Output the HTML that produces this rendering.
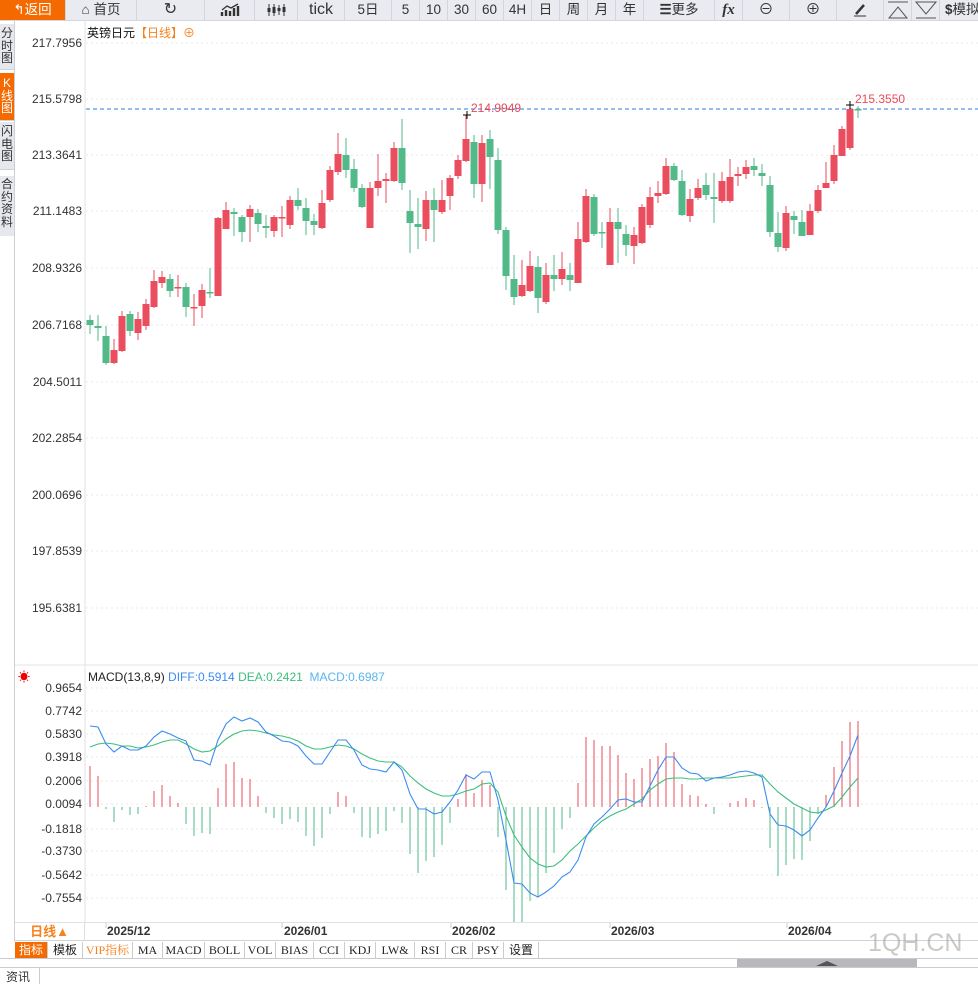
<!DOCTYPE html>
<html><head><meta charset="utf-8">
<style>
*{margin:0;padding:0;box-sizing:border-box}
body{width:978px;height:984px;overflow:hidden;background:#fff;font-family:"Liberation Sans","Noto Sans CJK SC",sans-serif;position:relative}
.tb{position:absolute;left:0;top:0;width:978px;height:21px;background:#e9ebf0;border-bottom:1px solid #d5d8de;overflow:hidden}
.b{position:absolute;top:0;height:21px;border-right:1px solid #d2d5db;font-size:13.5px;color:#333;text-align:center;line-height:20px;white-space:nowrap;overflow:hidden}
.lt{position:absolute;left:0;width:14px;background:#e6e8ee;color:#333;font-size:12px;line-height:12.5px;text-align:center;border-bottom:1px solid #cfd2d8}
.ax{position:absolute;font-size:12px;color:#333;text-align:right;width:80px;left:2px}
.tab{position:absolute;top:942px;height:17px;border-right:1px solid #ccc;font-size:12px;line-height:17px;text-align:center;color:#222;font-family:"Liberation Serif","Noto Serif CJK SC",serif}
</style></head><body>
<div class="tb">
<div class="b" style="left:0;width:66px;background:#f56a00;color:#fff;">↰返回</div>
<div class="b" style="left:66px;width:71px">⌂ 首页</div>
<div class="b" style="left:137px;width:68px;font-size:16px">↻</div>
<div class="b" style="left:205px;width:50px"><svg width="20" height="14" viewBox="0 0 20 14" style="margin-top:3px"><path d="M2 13V9M6 13V7M10 13V8M14 13V5M18 13V3" stroke="#333" stroke-width="2.4"/><path d="M2 7L7 3L11 5L18 1" stroke="#333" fill="none" stroke-width="1.3"/></svg></div>
<div class="b" style="left:255px;width:43px"><svg width="20" height="14" viewBox="0 0 20 14" style="margin-top:3px"><path d="M3 1v12M8 1v12M13 2v10M18 1v12" stroke="#333"/><path d="M3 5v4M8 4v6M13 5v3M18 4v5" stroke="#333" stroke-width="3"/></svg></div>
<div class="b" style="left:298px;width:47px;font-size:16px">tick</div>
<div class="b" style="left:345px;width:47px">5日</div>
<div class="b" style="left:392px;width:28px">5</div>
<div class="b" style="left:420px;width:28px">10</div>
<div class="b" style="left:448px;width:28px">30</div>
<div class="b" style="left:476px;width:28px">60</div>
<div class="b" style="left:504px;width:28px">4H</div>
<div class="b" style="left:532px;width:28px">日</div>
<div class="b" style="left:560px;width:28px">周</div>
<div class="b" style="left:588px;width:28px">月</div>
<div class="b" style="left:616px;width:28px">年</div>
<div class="b" style="left:644px;width:71px"><b>☰</b>更多</div>
<div class="b" style="left:715px;width:28px;font-style:italic;font-weight:bold;font-family:'Liberation Serif',serif;font-size:15px">fx</div>
<div class="b" style="left:743px;width:47px;font-size:15px">⊖</div>
<div class="b" style="left:790px;width:47px;font-size:15px">⊕</div>
<div class="b" style="left:837px;width:47px"><svg width="16" height="14" viewBox="0 0 16 14" style="margin-top:3px"><path d="M4 11L12 2" stroke="#333" stroke-width="2.5"/><path d="M2 13H14" stroke="#333"/></svg></div>
<div class="b" style="left:884px;width:28px"><svg width="22" height="18" viewBox="0 0 22 18" style="margin-top:1px"><path d="M1 1H21M2 17H20L11 6Z" stroke="#555" fill="none"/></svg></div>
<div class="b" style="left:912px;width:28px"><svg width="22" height="18" viewBox="0 0 22 18" style="margin-top:1px"><path d="M1 1H21L11 13ZM1 17H21" stroke="#555" fill="none"/></svg></div>
<div class="b" style="left:940px;width:60px;text-align:left;padding-left:5px"><b>$</b>模拟</div>
</div>
<div class="lt" style="top:24px;height:46px;padding-top:3px">分<br>时<br>图</div>
<div class="lt" style="top:73px;height:48px;padding-top:4px;background:#f56a00;color:#fff">K<br>线<br>图</div>
<div class="lt" style="top:122px;height:48px;padding-top:3px">闪<br>电<br>图</div>
<div class="lt" style="top:176px;height:60px;padding-top:2px;border-bottom:none">合<br>约<br>资<br>料</div>
<div style="position:absolute;left:14px;top:21px;width:1px;height:921px;background:#ccd0d6"></div>

<div class="ax" style="top:36px">217.7956</div>
<div class="ax" style="top:92px">215.5798</div>
<div class="ax" style="top:148px">213.3641</div>
<div class="ax" style="top:204px">211.1483</div>
<div class="ax" style="top:261px">208.9326</div>
<div class="ax" style="top:318px">206.7168</div>
<div class="ax" style="top:375px">204.5011</div>
<div class="ax" style="top:431px">202.2854</div>
<div class="ax" style="top:488px">200.0696</div>
<div class="ax" style="top:544px">197.8539</div>
<div class="ax" style="top:601px">195.6381</div>
<div class="ax" style="top:681px">0.9654</div>
<div class="ax" style="top:704px">0.7742</div>
<div class="ax" style="top:727px">0.5830</div>
<div class="ax" style="top:750px">0.3918</div>
<div class="ax" style="top:774px">0.2006</div>
<div class="ax" style="top:797px">0.0094</div>
<div class="ax" style="top:822px">-0.1818</div>
<div class="ax" style="top:844px">-0.3730</div>
<div class="ax" style="top:868px">-0.5642</div>
<div class="ax" style="top:891px">-0.7554</div>

<div style="position:absolute;left:87px;top:24px;font-size:12px;color:#111">英镑日元<span style="color:#f58220">【日线】⊕</span></div>
<div style="position:absolute;left:18px;top:668px;font-size:12px;color:#e00">☀</div>
<div style="position:absolute;left:88px;top:670px;font-size:12px;color:#222">MACD(13,8,9) <span style="color:#3b8cf0">DIFF:0.5914</span> <span style="color:#3cbf7a">DEA:0.2421</span> &nbsp;<span style="color:#5ab4f0">MACD:0.6987</span></div>

<svg id="ch" width="978" height="984" style="position:absolute;left:0;top:0;pointer-events:none"></svg>

<div style="position:absolute;left:15px;top:922px;width:963px;height:1px;background:#dfe3e8"></div>
<div style="position:absolute;left:15px;top:940px;width:963px;height:1px;background:#cfd3d8"></div>
<div style="position:absolute;left:15px;top:922px;width:70px;height:19px;border-right:1px solid #ddd;font-size:13px;font-weight:bold;color:#f58220;text-align:center;line-height:19px">日线▲</div>
<div style="position:absolute;top:924px;left:107px;font-size:12px;font-weight:bold;color:#333">2025/12</div>
<div style="position:absolute;top:924px;left:284px;font-size:12px;font-weight:bold;color:#333">2026/01</div>
<div style="position:absolute;top:924px;left:452px;font-size:12px;font-weight:bold;color:#333">2026/02</div>
<div style="position:absolute;top:924px;left:611px;font-size:12px;font-weight:bold;color:#333">2026/03</div>
<div style="position:absolute;top:924px;left:788px;font-size:12px;font-weight:bold;color:#333">2026/04</div>

<div class="tab" style="left:15px;width:33px;background:#f56a00;color:#fff;font-family:'Liberation Sans','Noto Sans CJK SC',sans-serif">指标</div>
<div class="tab" style="left:48px;width:35px;font-family:'Liberation Sans','Noto Sans CJK SC',sans-serif">模板</div>
<div class="tab" style="left:83px;width:50px;color:#f58220">VIP指标</div>
<div class="tab" style="left:133px;width:30px">MA</div>
<div class="tab" style="left:163px;width:42px">MACD</div>
<div class="tab" style="left:205px;width:40px">BOLL</div>
<div class="tab" style="left:245px;width:31px">VOL</div>
<div class="tab" style="left:276px;width:38px">BIAS</div>
<div class="tab" style="left:314px;width:31px">CCI</div>
<div class="tab" style="left:345px;width:31px">KDJ</div>
<div class="tab" style="left:376px;width:39px">LW&amp;</div>
<div class="tab" style="left:415px;width:31px">RSI</div>
<div class="tab" style="left:446px;width:27px">CR</div>
<div class="tab" style="left:473px;width:31px">PSY</div>
<div class="tab" style="left:504px;width:35px;font-family:'Liberation Sans','Noto Sans CJK SC',sans-serif">设置</div>
<div style="position:absolute;left:0;top:958px;width:978px;height:1px;background:#c8ccd2"></div>
<div style="position:absolute;left:0;top:967px;width:978px;height:1px;background:#c8ccd2"></div>
<div style="position:absolute;left:737px;top:959px;width:180px;height:8px;background:#b8b8bc"></div>
<div style="position:absolute;left:816px;top:961px;width:0;height:0;border-left:11px solid transparent;border-right:11px solid transparent;border-bottom:5px solid #555"></div>
<div style="position:absolute;left:0;top:968px;width:40px;height:16px;border-right:1px solid #ccc;font-size:12px;color:#333;padding-left:6px;line-height:18px">资讯</div>
<div style="position:absolute;left:868px;top:929px;font-size:25px;color:rgba(160,155,150,0.55);font-family:'Liberation Sans',sans-serif">1QH.CN</div>

<script>
var s='',G='#52ba88',R='#ea4d5d';
function L(x1,y1,x2,y2,c,w,e){s+='<line x1="'+x1+'" y1="'+y1+'" x2="'+x2+'" y2="'+y2+'" stroke="'+c+'" stroke-width="'+(w||1)+'"'+(e||'')+'/>';}
L(85,21,85,922,'#dde1e6');
[43,99,155,211,268,325,382,438,495,551,608].forEach(function(y){L(86,y,978,y,'#e8e8e8',1,' stroke-dasharray="2,3"');});
[688,711,734,757,781,804,829,851,875,898].forEach(function(y){L(86,y,978,y,'#e8e8e8',1,' stroke-dasharray="2,3"');});
L(15,665,978,665,'#e0e4e8');
L(86,109,978,109,'#2a7de1',1,' stroke-dasharray="4,3"');
[107,283,452,611,788].forEach(function(x){L(x-1,922,x-1,928,'#ccc');});
var C=[
['g',320,325,315,334],['g',326,328,315,341],['g',336,363,326,365],['r',350,363,339,364],['r',316,351,311,352],['g',314,331,311,336],['r',319,333,312,340],['r',304,326,299,330],['r',281,307,270,308],['r',277,283,271,288],['g',279,291,274,297],['r',287,288,275,297],['g',287,307,283,317],['r',307,308,294,326],['r',290,306,284,318],['g',292,293,268,298],['r',218,296,217,296],['r',210,229,202,229],['g',212,214,208,236],['g',217,232,215,242],['r',209,217,205,242],['g',213,224,209,232],['g',226,228,215,238],['r',217,231,215,237],['r',217,218,206,237],['r',200,225,196,229],['g',200,206,188,210],['g',208,221,198,235],['g',221,225,214,235],['r',203,228,190,229],['r',170,200,166,202],['r',154,172,133,175],['g',155,170,138,178],['g',169,188,159,192],['g',188,207,184,208],['r',188,228,182,228],['r',181,188,154,196],
['r',179,181,173,203],['r',148,181,142,182],['g',148,183,119,190],['g',211,223,190,253],['g',224,227,198,249],['r',200,229,191,241],['g',200,210,188,242],['r',200,212,180,214],['r',178,196,175,210],['r',160,176,155,179],['r',139,161,115,162],['g',142,184,135,198],['r',143,184,135,202],['g',139,157,130,189],['g',160,230,148,234],['g',230,276,227,290],['g',279,297,255,305],['r',285,296,260,297],['r',266,291,251,292],['g',267,298,256,313],['r',275,302,263,304],['g',275,279,255,291],['r',269,279,252,285],['g',275,280,263,291],['r',239,283,222,283],['r',196,242,189,243],['g',197,234,194,236],['g',232,233,222,248],['r',222,265,208,265],['g',222,229,208,263],['g',234,245,225,256],['r',235,246,227,264],['r',207,243,204,244],['r',197,225,187,228],['r',193,196,181,203],['r',166,194,158,195],['g',166,180,163,181],
['g',181,215,170,216],['r',199,216,189,222],['r',188,198,179,200],['g',185,195,173,200],['g',197,199,173,223],['r',181,201,172,203],['r',177,201,159,203],['r',174,176,167,186],['r',167,174,160,179],['g',166,170,158,176],['g',173,176,164,186],['g',185,232,176,237],['g',233,247,212,252],['r',213,248,206,251],['g',216,220,211,234],['g',222,236,210,236],['r',211,235,204,235],['r',190,211,185,213],['r',183,188,162,188],['r',155,181,145,184],['r',129,156,126,156],['r',109,148,106,150],['g',109,110,106,118]];
C.forEach(function(c,i){var x=90+8*i,col=c[0]=='g'?G:R;L(x,c[3],x,c[4],col);var h=Math.max(c[2]-c[1],1.5);s+='<rect x="'+(x-3.5)+'" y="'+c[1]+'" width="7" height="'+h+'" fill="'+col+'"/>';});
L(463,115,471,115,'#000');L(467,111,467,119,'#000');
L(846,105,854,105,'#000');L(850,101,850,109,'#000');
s+='<text x="471" y="112" font-size="12" fill="#e84a5a" font-family="Liberation Sans">214.9949</text>';
s+='<text x="855" y="103" font-size="12" fill="#e84a5a" font-family="Liberation Sans">215.3550</text>';
var M=[766,776,809,822,810,815,814,806,791,785,796,803,824,836,833,834,788,764,762,778,779,796,813,818,824,819,822,836,846,838,814,792,796,813,837,838,834,831,811,823,854,873,861,857,845,823,799,774,793,
780,785,837,890,923,923,901,897,873,853,829,818,783,737,740,746,746,755,773,779,768,759,756,743,752,784,795,796,804,814,807,803,801,798,800,808,848,876,865,859,860,841,814,795,767,741,722,721];
M.forEach(function(y,i){var x=90+8*i;L(x,807,x,y,y<807?R:G);});
var D=[726,727,744,752,746,750,750,746,737,731,734,738,741,760,761,765,740,724,717,721,718,722,732,736,741,742,746,756,764,764,752,740,740,750,765,769,770,772,762,770,794,809,809,814,812,802,790,775,779,772,772,800,840,883,884,893,897,892,886,877,872,860,837,824,817,809,800,799,802,802,786,770,757,757,768,773,774,781,778,777,775,772,771,773,777,814,825,826,830,836,830,818,807,791,773,756,735];
var E=[747,744,743,744,746,746,748,747,745,742,740,740,744,749,752,751,746,739,734,731,730,731,733,735,736,738,741,746,749,749,747,745,746,749,754,758,761,762,762,767,776,783,789,793,796,796,794,791,789,784,783,792,816,835,847,858,864,867,866,860,851,844,836,828,821,816,812,809,804,799,790,784,779,778,778,779,779,778,778,778,778,777,776,775,775,784,792,798,804,808,812,813,810,806,797,787,778];
function P(a,c){s+='<polyline fill="none" stroke="'+c+'" stroke-width="1.1" points="'+a.map(function(y,i){return (90+8*i)+','+y}).join(' ')+'"/>';}
P(E,'#3cbf7a');P(D,'#3b8cf0');
document.getElementById('ch').innerHTML=s;
</script>
</body></html>
